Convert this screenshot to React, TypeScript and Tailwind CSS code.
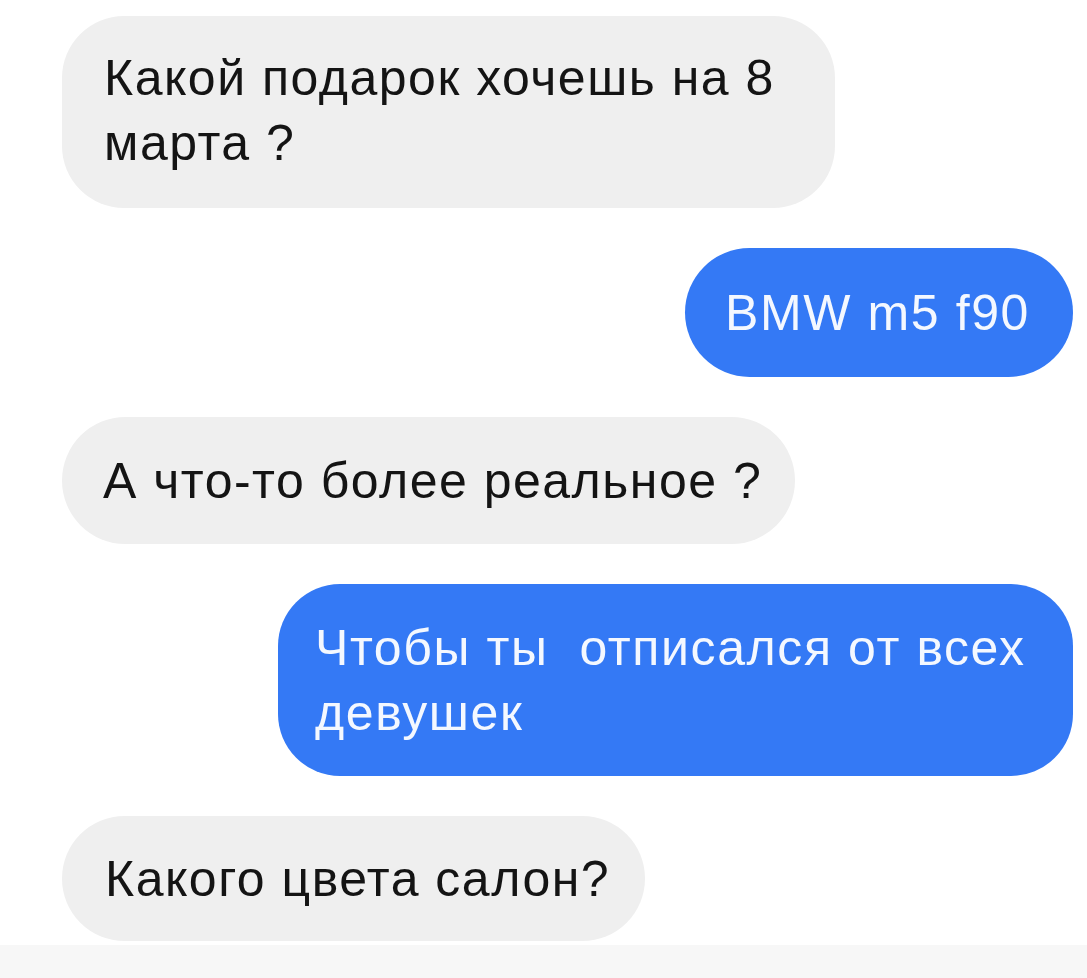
const font = { fontFamily: '"Liberation Sans", Arial, sans-serif' };

function Incoming({ children, className }: { children: React.ReactNode; className: string }) {
  return (
    <div className={`self-start bg-[#efefef] text-[#141414] text-[50px] leading-[65px] tracking-[1.5px] ${className}`}>
      {children}
    </div>
  );
}

function Outgoing({ children, className }: { children: React.ReactNode; className: string }) {
  return (
    <div className={`self-end bg-[#3479f5] text-[#f4f8ff] text-[50px] leading-[65px] tracking-[1.6px] ${className}`}>
      {children}
    </div>
  );
}

export default function App() {
  return (
    <div className="w-[1087px] h-[978px] bg-white flex flex-col overflow-hidden" style={font}>
      <div className="flex flex-col pl-[62px] pr-[14px] pt-[16px] gap-[40px]">
        <Incoming className="w-[773px] h-[192px] rounded-[62px] pl-[42px] pt-[30px]">
          Какой подарок хочешь на 8
          <br />
          марта ?
        </Incoming>

        <Outgoing className="w-[388px] h-[129px] rounded-full pl-[40px] pt-[33px] whitespace-nowrap">
          BMW m5 f90
        </Outgoing>

        <Incoming className="w-[733px] h-[127px] rounded-full pl-[41px] pt-[32px] whitespace-nowrap">
          А что-то более реальное ?
        </Incoming>

        <Outgoing className="w-[795px] h-[192px] rounded-[62px] pl-[37px] pt-[32px] whitespace-pre">
          {'Чтобы ты  отписался от всех\nдевушек'}
        </Outgoing>

        <Incoming className="w-[583px] h-[125px] rounded-full pl-[43px] pt-[31px] whitespace-nowrap">
          Какого цвета салон?
        </Incoming>
      </div>
      <div className="mt-auto h-[33px] bg-[#f7f7f7]" />
    </div>
  );
}
